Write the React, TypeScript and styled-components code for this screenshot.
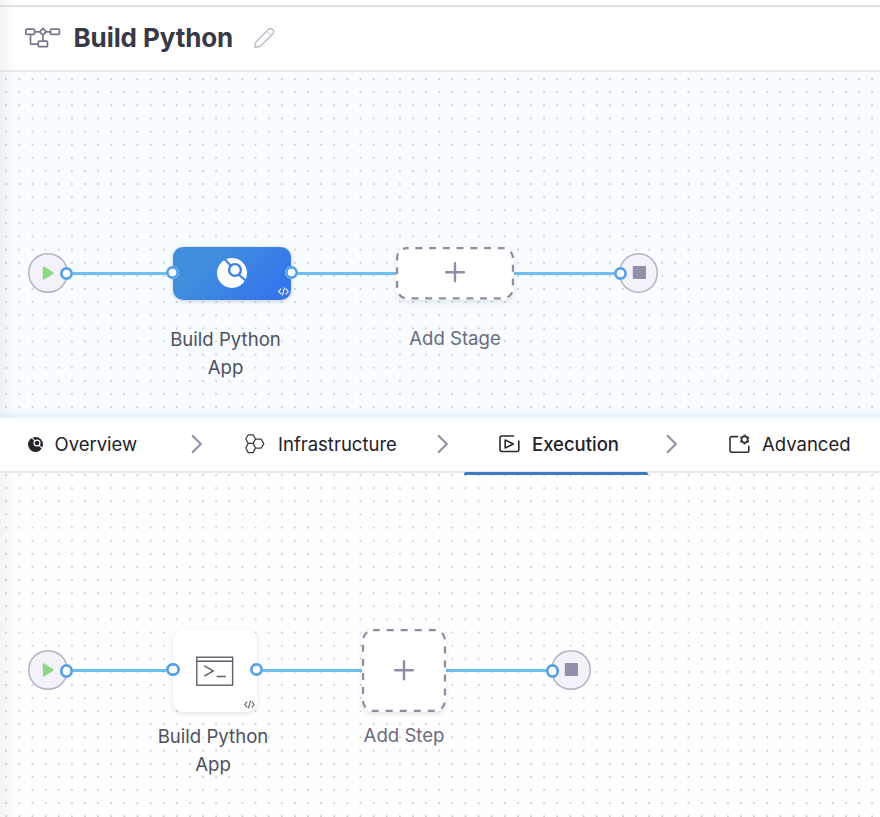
import React from "react";
import styled, { createGlobalStyle, css } from "styled-components";

const GlobalStyle = createGlobalStyle`
  * { box-sizing: border-box; }
  html, body { margin: 0; padding: 0; }
  body {
    font-family: Inter, "Liberation Sans", sans-serif;
    background: #fff;
    overflow: hidden;
  }
  svg { display: block; }
`;

const Page = styled.main`
  position: relative;
  width: 880px;
  height: 817px;
  display: flex;
  flex-direction: column;
  overflow: hidden;

  &::after {
    content: "";
    position: absolute;
    inset: 0 auto 0 0;
    width: 15px;
    background: linear-gradient(90deg, rgba(70, 70, 80, 0.06), rgba(70, 70, 80, 0));
    pointer-events: none;
  }
`;

const TopStrip = styled.div`
  height: 7px;
  flex: none;
  border-bottom: 2px solid #e0e0e8;
`;

const Header = styled.header`
  height: 65px;
  flex: none;
  display: flex;
  align-items: center;
  padding: 0 0 1px 24px;
  border-bottom: 2px solid #e9eaec;
`;

const Title = styled.h1`
  margin: 0 20px 0 12.5px;
  width: 160.5px;
  font-size: 26px;
  line-height: 36px;
  font-weight: 700;
  letter-spacing: -0.1px;
  color: #383946;
  white-space: nowrap;
`;

const Canvas = styled.section<{ $tone: "stage" | "step" }>`
  position: relative;
  flex: none;
  ${({ $tone }) =>
    $tone === "stage"
      ? css`
          height: 341px;
          background: #f7fcff;
        `
      : css`
          height: 344px;
          background: #fefefe;
        `}
`;

const DotLayer = styled.svg`
  position: absolute;
  inset: 0;
  width: 100%;
  height: 100%;
`;

const Divider = styled.div`
  height: 5px;
  flex: none;
  background: #eaf6fe;
`;

const TabBar = styled.nav`
  height: 55px;
  flex: none;
  display: flex;
  align-items: stretch;
  background: #fff;
  border-bottom: 2px solid #e7e9ea;
  position: relative;
  z-index: 1;
`;

const Tab = styled.button<{ $width: number; $gap: number; $pad: number; $active?: boolean }>`
  position: relative;
  flex: none;
  width: ${({ $width }) => $width}px;
  padding: 0 0 1px ${({ $pad }) => $pad}px;
  display: flex;
  align-items: center;
  gap: ${({ $gap }) => $gap}px;
  border: 0;
  background: none;
  font-family: inherit;
  font-size: 18.5px;
  font-weight: ${({ $active }) => ($active ? 500 : 400)};
  color: #22222a;
  white-space: nowrap;

  ${({ $active }) =>
    $active &&
    css`
      &::after {
        content: "";
        position: absolute;
        left: 0;
        right: 0;
        bottom: -4px;
        height: 3px;
        border-radius: 2px 2px 0 0;
        background: #3f7ac6;
      }
    `}
`;

const Arrow = styled.div<{ $width: number; $pad: number }>`
  width: ${({ $width }) => $width}px;
  padding: 0 0 1px ${({ $pad }) => $pad}px;
  flex: none;
  display: flex;
  align-items: center;
`;

const Link = styled.div<{ $x: number; $y: number; $length: number }>`
  position: absolute;
  left: ${({ $x }) => $x}px;
  top: ${({ $y }) => $y}px;
  width: ${({ $length }) => $length}px;
  height: 3px;
  background: #6dbfec;
`;

const Port = styled.span<{ $x: number; $y: number }>`
  position: absolute;
  left: ${({ $x }) => $x - 6.7}px;
  top: ${({ $y }) => $y - 6.7}px;
  width: 13.4px;
  height: 13.4px;
  border-radius: 50%;
  background: #fff;
  box-shadow: inset 0 0 0 2.7px #559fe8;
`;

const Node = styled.div<{ $x: number; $y: number; $w: number; $h: number }>`
  position: absolute;
  left: ${({ $x }) => $x}px;
  top: ${({ $y }) => $y}px;
  width: ${({ $w }) => $w}px;
  height: ${({ $h }) => $h}px;
  display: flex;
  align-items: center;
  justify-content: center;
`;

const Terminal = styled(Node)`
  border-radius: 50%;
  background: #f3f2f9;
  box-shadow: inset 0 0 0 1.5px #b5b2c5;
`;

const StageCard = styled(Node)`
  border-radius: 10px;
  background: linear-gradient(135deg, #418fdc 25%, #3575ec 88%);
  box-shadow: 0 1px 4px rgba(60, 80, 130, 0.28);
`;

const StepCard = styled(Node)`
  border-radius: 10px;
  background: #fff;
  box-shadow: 0 2px 5px rgba(70, 75, 100, 0.14);
`;

const AddCard = styled(Node)`
  border-radius: 11px;
  background: #fff;
  box-shadow: 0 2px 5px rgba(70, 75, 100, 0.14);
`;

const Outline = styled.svg`
  position: absolute;
  inset: 0;
`;

const CodeMark = styled.svg`
  position: absolute;
  right: 2px;
  bottom: 3.5px;
`;

const Label = styled.p<{ $center: number; $y: number; $soft?: boolean }>`
  position: absolute;
  left: ${({ $center }) => $center - 65}px;
  top: ${({ $y }) => $y}px;
  width: 130px;
  margin: 0;
  font-size: 18.6px;
  line-height: 28px;
  text-align: center;
  color: ${({ $soft }) => ($soft ? "#6a6c80" : "#4f5162")};
`;

const Dots = ({ id, top }: { id: string; top: number }) => (
  <DotLayer>
    <defs>
      <pattern id={id} x="-0.3" y={top} width="13.12" height="13.12" patternUnits="userSpaceOnUse">
        <circle cx="6.56" cy="6.56" r="0.95" fill="#bcc5c9" />
      </pattern>
    </defs>
    <rect width="100%" height="100%" fill={`url(#${id})`} />
  </DotLayer>
);

const PipelineIcon = () => (
  <svg width="37" height="22" viewBox="0 0 37 22" fill="none" stroke="#77788d" strokeWidth="1.7">
    <rect x="1.9" y="2.1" width="8.6" height="5.3" rx="0.8" />
    <rect x="26.5" y="2.1" width="8.9" height="5.3" rx="0.8" />
    <rect x="14.3" y="14.2" width="9.2" height="5.5" rx="0.8" />
    <path d="M18.9 1.4 22.2 4.8l-3.3 3.4-3.3-3.4ZM10.4 4.8h5.2M22.2 4.8h4.3M18.9 8.2v6M6.5 7.4v9q0 .8.8.8h7" />
  </svg>
);

const PencilIcon = () => (
  <svg width="22" height="22" viewBox="0 0 22 22" fill="none" stroke="#bcbcc8" strokeWidth="1.4" strokeLinejoin="round">
    <path d="M1 20.3 1.7 15.2 14.6 2.3q1.7-1.6 3.5 0l1 1q1.4 1.7-.2 3.4L6.3 19.3Z" />
    <path d="m12.5 4.4 4.6 4.4" strokeWidth=".8" />
  </svg>
);

const BuildIcon = ({ size, color, gap }: { size: number; color: string; gap: string }) => (
  <svg width={size} height={size} viewBox="0 0 30 30" fill="none">
    <circle cx="15" cy="15" r="15" fill={color} />
    <path d="M7.2 .5 14 8M21.5 16.5 30 23.7" stroke={gap} strokeWidth="2.2" />
    <circle cx="18" cy="12" r="7.1" fill={gap} />
    <circle cx="18" cy="12" r="4.7" fill={color} />
  </svg>
);

const ChevronIcon = () => (
  <svg width="12" height="20" viewBox="0 0 12 20" fill="none" stroke="#9392a6" strokeWidth="2.2" strokeLinecap="round" strokeLinejoin="round">
    <path d="m1.8 1.9 8 8.1-8 8.1" />
  </svg>
);

const HexIcon = () => (
  <svg width="20" height="20" viewBox="0 0 20 20" fill="none" stroke="#3a3a40" strokeWidth="1.25" strokeLinejoin="round">
    <path d="M3.2.8h4.9l2.4 4.2-2.4 4.4H3.2L.8 5ZM3.2 9.4h4.9l2.4 4.6-2.4 4.6H3.2L.8 14ZM10.3 5.2h5.9l2.6 4.4-2.6 4.4h-5.7" />
  </svg>
);

const ExecutionIcon = () => (
  <svg width="21" height="18" viewBox="0 0 21 18" fill="none" stroke="#28282e" strokeWidth="1.6" strokeLinecap="round" strokeLinejoin="round">
    <path d="M14.5 1H3Q1 1 1 3v11.5q0 2 2 2h15q1.8 0 1.8-2V6" />
    <path d="M6.2 5v8l8.1-4Z" />
  </svg>
);

const GEAR_TEETH = [0, 60, 120, 180, 240, 300];

const AdvancedIcon = () => (
  <svg width="22" height="20" viewBox="0 0 22 20" fill="none" stroke="#333339" strokeWidth="1.6" strokeLinecap="round">
    <path d="M8.6 2.6H3Q1 2.6 1 4.6v11.6q0 2 2 2h15q1.8 0 1.8-2v-3.8" />
    <circle cx="15.6" cy="5.5" r="3.1" strokeWidth="1.7" />
    {GEAR_TEETH.map((angle) => (
      <path key={angle} d="M15.6 2.2V.6" strokeWidth="2.1" strokeLinecap="butt" transform={`rotate(${angle} 15.6 5.5)`} />
    ))}
  </svg>
);

const CodeIcon = ({ color }: { color: string }) => (
  <CodeMark width="11" height="9" viewBox="0 0 11 9" fill="none" stroke={color} strokeWidth="1.1">
    <path d="M3.3 1.7.7 4.5l2.6 2.8M7.7 1.7l2.6 2.8-2.6 2.8M6.6.6 4.4 8.4" />
  </CodeMark>
);

const PlusIcon = () => (
  <svg width="20" height="22" viewBox="0 0 20 22" fill="none" stroke="#8f8da3" strokeWidth="2.4" strokeLinecap="round">
    <path d="M10 1.2v18M1 10.2h18" />
  </svg>
);

const PlayIcon = () => (
  <svg width="12" height="14" viewBox="0 0 12 14" fill="#8fd883">
    <path d="M.8 1.3Q.8-.2 2 .5l9 5.6q1 .9 0 1.8l-9 5.6q-1.2.7-1.2-.8Z" />
  </svg>
);

const StopIcon = () => (
  <svg width="15" height="13" viewBox="0 0 15 13" fill="#9290a8">
    <rect x="1.8" width="13.2" height="13" rx="1" />
  </svg>
);

const ConsoleIcon = () => (
  <svg width="38" height="30" viewBox="0 0 38 30" fill="none" stroke="#5e5e68" strokeWidth="1.4">
    <rect x=".8" y="1.2" width="35.8" height="28" />
    <path d="M.8 5.2h35.8M8.3 9.8l9 5.1-9 5.3M20.7 20.5h9" />
  </svg>
);

const AddBox = ({ x, y, w, h, dashes, shift }: { x: number; y: number; w: number; h: number; dashes: number; shift: number }) => {
  const perimeter = 2 * (w - 2 + h - 2) - 80 + 62.83;
  const period = perimeter / dashes;
  return (
    <AddCard $x={x} $y={y} $w={w} $h={h}>
      <Outline width={w} height={h} fill="none" stroke="#8f8da2" strokeWidth="2.2">
        <rect x="1.1" y="1.1" width={w - 2.2} height={h - 2.2} rx="10" strokeDasharray={`7 ${period - 7}`} strokeDashoffset={-shift} />
      </Outline>
      <PlusIcon />
    </AddCard>
  );
};

export default function App() {
  return (
    <>
      <GlobalStyle />
      <Page>
        <TopStrip />
        <Header>
          <PipelineIcon />
          <Title>Build Python</Title>
          <PencilIcon />
        </Header>

        <Canvas $tone="stage">
          <Dots id="stage-dots" top={0.5} />
          <Link $x={66} $y={200} $length={107} />
          <Link $x={291} $y={200} $length={106} />
          <Link $x={513} $y={200} $length={108} />
          <Terminal $x={28.3} $y={181} $w={39.5} $h={39.5}>
            <PlayIcon />
          </Terminal>
          <StageCard $x={173} $y={175} $w={118} $h={52.5}>
            <BuildIcon size={30} color="#fff" gap="#3c83e2" />
            <CodeIcon color="#fff" />
          </StageCard>
          <AddBox x={396} y={175} w={118} h={52.5} dashes={23} shift={8.3} />
          <Terminal $x={618.8} $y={181} $w={39.5} $h={39.5}>
            <StopIcon />
          </Terminal>
          <Port $x={66.3} $y={201.8} />
          <Port $x={172.5} $y={200.3} />
          <Port $x={291.7} $y={200.3} />
          <Port $x={620.5} $y={201.8} />
          <Label $center={225.5} $y={253}>Build Python App</Label>
          <Label $center={455} $y={252} $soft>Add Stage</Label>
        </Canvas>

        <Divider />

        <TabBar>
          <Tab $width={190} $pad={28} $gap={11.5}>
            <BuildIcon size={15} color="#25252d" gap="#fff" />
            Overview
          </Tab>
          <Arrow $width={54} $pad={1}><ChevronIcon /></Arrow>
          <Tab $width={192} $pad={1} $gap={13}>
            <HexIcon />
            Infrastructure
          </Tab>
          <Arrow $width={28} $pad={0.5}><ChevronIcon /></Arrow>
          <Tab $width={184} $pad={34.5} $gap={12.5} $active>
            <ExecutionIcon />
            Execution
          </Tab>
          <Arrow $width={80} $pad={18}><ChevronIcon /></Arrow>
          <Tab $width={152} $pad={0.5} $gap={11.5}>
            <AdvancedIcon />
            Advanced
          </Tab>
        </TabBar>

        <Canvas $tone="step">
          <Dots id="step-dots" top={-4.5} />
          <Link $x={66} $y={196} $length={107} />
          <Link $x={257} $y={196} $length={106} />
          <Link $x={445} $y={196} $length={108} />
          <Terminal $x={28.3} $y={177} $w={39.5} $h={39.5}>
            <PlayIcon />
          </Terminal>
          <StepCard $x={172.5} $y={156} $w={84.5} $h={83}>
            <ConsoleIcon />
            <CodeIcon color="#5e5e68" />
          </StepCard>
          <AddBox x={362} y={156} w={84} h={83} dashes={22} shift={-0.5} />
          <Terminal $x={551} $y={177} $w={39.5} $h={39.5}>
            <StopIcon />
          </Terminal>
          <Port $x={66.3} $y={198} />
          <Port $x={173} $y={196.5} />
          <Port $x={256.2} $y={196.5} />
          <Port $x={552.5} $y={198} />
          <Label $center={213} $y={249}>Build Python App</Label>
          <Label $center={404} $y={248} $soft>Add Step</Label>
        </Canvas>
      </Page>
    </>
  );
}
